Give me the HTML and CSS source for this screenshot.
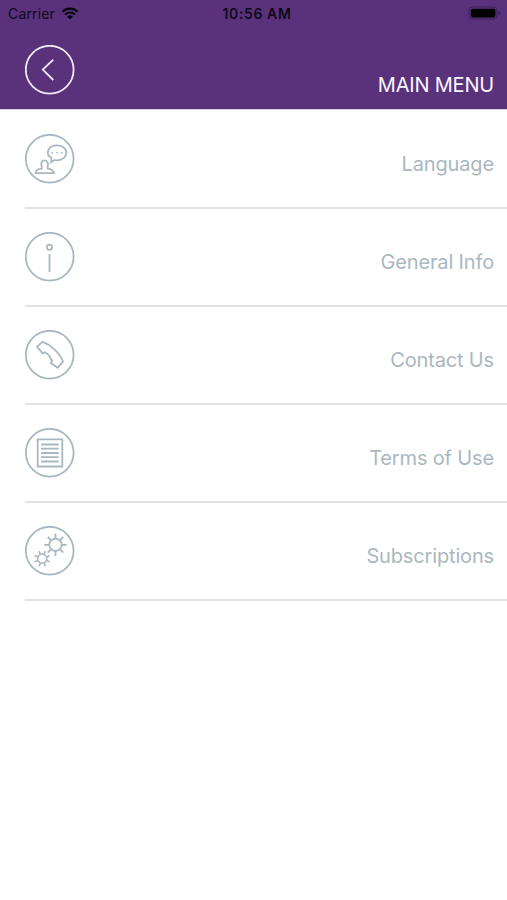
FILE: index.html
```
<!DOCTYPE html>
<html lang="en">
<head>
    <meta charset="UTF-8">
    <meta name="viewport" content="width=device-width, initial-scale=1.0">
    <title>Main Menu</title>
    <link rel="stylesheet" href="styles.css">
</head>
<body>

    <header class="header">
        <div class="status-bar">
            <div class="carrier">
                <span>Carrier</span>
                <svg class="wifi" width="18" height="13" viewBox="0 0 18 13">
                    <path d="M1.4 4.7a10.7 10.7 0 0 1 15.2 0M4.2 7.5a6.8 6.8 0 0 1 9.6 0"/>
                    <path class="wifi-dot" d="M6.2 9.7a4 4 0 0 1 5.6 0L9 12.6z"/>
                </svg>
            </div>
            <span class="time">10:56 AM</span>
            <svg class="battery" width="34" height="15" viewBox="0 0 34 15">
                <rect class="battery-case" x="1" y="1" width="28" height="12" rx="3.5"/>
                <rect x="2.8" y="2.8" width="24.6" height="8.6" rx="1.8"/>
                <path class="battery-tip" d="M30.5 4.8v4.6q2-.8 2-2.3t-2-2.3z"/>
            </svg>
        </div>
        <div class="title-bar">
            <a href="#" class="back">
                <svg class="icon" width="50" height="50" viewBox="0 0 50 50">
                    <circle cx="24.7" cy="24.7" r="23.9"/>
                    <path d="M28.3 14.7 17.8 24.6 28.3 35"/>
                </svg>
            </a>
            <h1>MAIN MENU</h1>
        </div>
    </header>

    <ul class="menu">
        <li class="item">
            <svg class="icon" width="50" height="50" viewBox="0 0 50 50">
                <circle cx="24.7" cy="24.7" r="23.9"/>
                <path d="M26.3 23.8C20.3 20.5 22.3 11.3 32 11.3c12.4 0 12.4 15 0 15-1 0-1.8-.1-2.5-.3l-3.3 2.3z"/>
                <path class="dots" d="M26.2 18.7h1.6M31.2 18.7h1.6M36.2 18.7h1.6"/>
                <path d="M10.7 39.2c.3-3.4 2.3-4 6-4.5v-2c-3-8.200 8.600-8.400 6-.1v2.100c3.600.6 5.700 1.100 6.100 4.500z"/>
            </svg>
            <span class="label">Language</span>
        </li>
        <li class="item">
            <svg class="icon" width="50" height="50" viewBox="0 0 50 50">
                <circle cx="24.7" cy="24.7" r="23.9"/>
                <circle cx="24.5" cy="15.3" r="2.6"/>
                <path d="M24.5 22v18"/>
            </svg>
            <span class="label">General Info</span>
        </li>
        <li class="item">
            <svg class="icon" width="50" height="50" viewBox="0 0 50 50">
                <circle cx="24.7" cy="24.7" r="23.9"/>
                <path d="M12 16.6 17.6 11.8C25.5 14.5 34.5 22.5 38 31.5L32.7 37.7 25.8 33 27.3 30.6 26 29.3C25 26.2 22.3 23.5 20 22.3L17.5 23.3z"/>
            </svg>
            <span class="label">Contact Us</span>
        </li>
        <li class="item">
            <svg class="icon" width="50" height="50" viewBox="0 0 50 50">
                <circle cx="24.7" cy="24.7" r="23.9"/>
                <path d="M12.7 11.3h24.6v27.2H12.7zM16 16.5h17.7M16 20.7h17.7M16 25h17.7M16 29.2h17.7M16 33.5h17.7"/>
            </svg>
            <span class="label">Terms of Use</span>
        </li>
        <li class="item">
            <svg class="icon" width="50" height="50" viewBox="0 0 50 50">
                <circle cx="24.7" cy="24.7" r="23.9"/>
                <g transform="translate(30.5 18.8)">
                    <circle r="6.2"/>
                    <path d="M0-6.2V-11.2M0 6.2V11.2M-6.2 0H-11.2M6.2 0H11.2M4.4-4.4l3.4-3.4M4.4 4.4l3.4 3.4M-4.4 4.4l-3.4 3.4M-4.4-4.4l-3.4-3.4"/>
                </g>
                <g class="gear-small" transform="translate(17.2 32.7) rotate(22.5) scale(.74)">
                    <circle r="6.2"/>
                    <path d="M0-6.2V-11M0 6.2V11M-6.2 0H-11M6.2 0H11M4.4-4.4l3.4-3.4M4.4 4.4l3.4 3.4M-4.4 4.4l-3.4 3.4M-4.4-4.4l-3.4-3.4"/>
                </g>
            </svg>
            <span class="label">Subscriptions</span>
        </li>
    </ul>

</body>
</html>
```
FILE: styles.css
```
body {
    margin: 0;
    padding: 0;
    font-family: 'Inter', sans-serif;
    background: #fff;
}

.header {
    height: 109px;
    background: #5a327c;
    border-bottom: 1px solid #d9cfe2;
    margin-bottom: 1px;
}

/* Status bar */
.status-bar {
    display: grid;
    grid-template-columns: 1fr auto 1fr;
    align-items: center;
    height: 27px;
    padding: 0 5px 0 8px;
    color: #100818;
    font-size: 14px;
}

.carrier {
    display: flex;
    align-items: center;
    gap: 6px;
    letter-spacing: 0.15px;
}

.time {
    padding-left: 4px;
    font-weight: 600;
    letter-spacing: 0.6px;
}

.wifi {
    fill: none;
    stroke: #07030c;
    stroke-width: 2.2;
}

.wifi-dot {
    fill: #07030c;
    stroke: none;
}

.battery {
    justify-self: end;
}

.battery-case {
    fill: none;
    stroke: #3b2054;
    stroke-width: 1;
}

.battery-tip {
    fill: #3b2054;
}

/* Title */
.title-bar {
    display: flex;
    justify-content: space-between;
    align-items: flex-start;
    padding: 18px 13px 0 25px;
}

.back {
    display: block;
    height: 50px;
    color: #f3e8fa;
}

.icon {
    display: block;
    fill: none;
    stroke: currentColor;
    stroke-width: 1.8;
}

h1 {
    margin: 26px 0 0;
    color: #fbf5ff;
    font-size: 20px;
    font-weight: 400;
    letter-spacing: -0.2px;
    line-height: 28px;
}

/* Menu list */
.menu {
    list-style: none;
    margin: 0;
    padding: 0 0 0 25px;
    color: #a9b8c0;
}

.item {
    display: flex;
    justify-content: space-between;
    align-items: flex-start;
    box-sizing: border-box;
    height: 98px;
    padding: 23px 13px 0 0;
    border-bottom: 2px solid #e3e3e3;
}

.label {
    margin-top: 16px;
    font-size: 20px;
    letter-spacing: -0.15px;
    line-height: 28px;
}

.dots {
    stroke-width: 1.6;
}

.gear-small {
    stroke-width: 2.2;
}
```
